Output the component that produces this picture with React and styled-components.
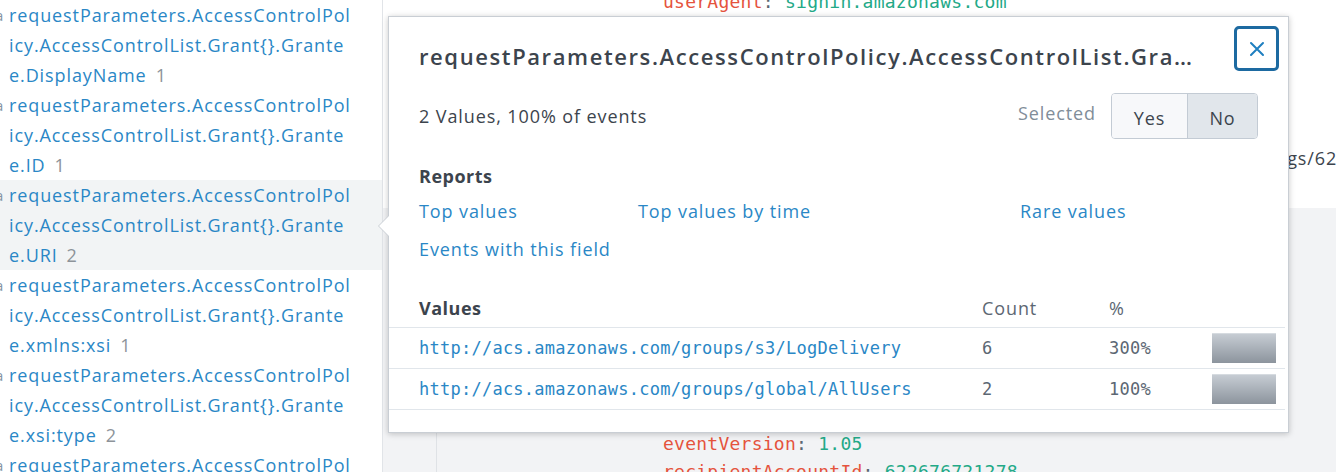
import React from 'react';
import styled, { createGlobalStyle } from 'styled-components';

const GlobalStyle = createGlobalStyle`
  body {
    margin: 0;
    font-family: "Open Sans", "Liberation Sans", sans-serif;
    font-size: 18px;
    letter-spacing: 0.9px;
    color: #3c444d;
    background: #fff;
  }
`;

const fields = [
  { lines: ['requestParameters.AccessControlPol', 'icy.AccessControlList.Grant{}.Grante', 'e.DisplayName'], count: 1 },
  { lines: ['requestParameters.AccessControlPol', 'icy.AccessControlList.Grant{}.Grante', 'e.ID'], count: 1 },
  { lines: ['requestParameters.AccessControlPol', 'icy.AccessControlList.Grant{}.Grante', 'e.URI'], count: 2, active: true },
  { lines: ['requestParameters.AccessControlPol', 'icy.AccessControlList.Grant{}.Grante', 'e.xmlns:xsi'], count: 1 },
  { lines: ['requestParameters.AccessControlPol', 'icy.AccessControlList.Grant{}.Grante', 'e.xsi:type'], count: 2 },
  { lines: ['requestParameters.AccessControlPol', 'icy.AccessControlList.Grant{}.Grante', 'e.Type'], count: 2 },
];

const values = [
  { value: 'http://acs.amazonaws.com/groups/s3/LogDelivery', count: 6, pct: '300%' },
  { value: 'http://acs.amazonaws.com/groups/global/AllUsers', count: 2, pct: '100%' },
];

export default function App() {
  return (
    <Page>
      <GlobalStyle />
      <Sidebar>
        {fields.map((f, i) => (
          <FieldItem key={i} $active={f.active}>
            <TypeMark>a</TypeMark>
            <FieldName>
              {f.lines.map((l, j) => (
                <FieldLine key={j}>
                  {l}
                  {j === f.lines.length - 1 && <FieldCount>{f.count}</FieldCount>}
                </FieldLine>
              ))}
            </FieldName>
          </FieldItem>
        ))}
      </Sidebar>

      <Main>
        <TopPane>
          <CodeLine $first>
            <Key>userAgent</Key>: <Val>signin.amazonaws.com</Val>
          </CodeLine>
          <MetaLine>logs/622676721278</MetaLine>
        </TopPane>
        <CodeBlock>
          <Gutter />
          <CodeBody>
            <CodeLine>
              <Key>eventVersion</Key>: <Val>1.05</Val>
            </CodeLine>
            <CodeLine>
              <Key>recipientAccountId</Key>: <Val>622676721278</Val>
            </CodeLine>
          </CodeBody>
        </CodeBlock>
      </Main>

      <Popover>
        <Arrow />
        <PopHeader>
          <PopTitle>requestParameters.AccessControlPolicy.AccessControlList.Grant{'{}'}.Grantee.URI</PopTitle>
          <CloseButton type="button" aria-label="Close">
            <svg width="16" height="16" viewBox="0 0 16 16">
              <path d="M2 2 L14 14 M14 2 L2 14" stroke="#1f7fc0" strokeWidth="2" strokeLinecap="round" />
            </svg>
          </CloseButton>
        </PopHeader>

        <StatsRow>
          <Stats>2 Values, 100% of events</Stats>
          <SelectWrap>
            <SelectLabel>Selected</SelectLabel>
            <ToggleGroup>
              <ToggleButton type="button">Yes</ToggleButton>
              <ToggleButton type="button" $on>No</ToggleButton>
            </ToggleGroup>
          </SelectWrap>
        </StatsRow>

        <Section>
          <SectionTitle>Reports</SectionTitle>
          <ReportGrid>
            <Link>Top values</Link>
            <Link>Top values by time</Link>
            <Link>Rare values</Link>
            <Link>Events with this field</Link>
          </ReportGrid>
        </Section>

        <Table>
          <HeadRow>
            <HeadCell $bold>Values</HeadCell>
            <HeadCell>Count</HeadCell>
            <HeadCell>%</HeadCell>
            <HeadCell />
          </HeadRow>
          {values.map((v) => (
            <Row key={v.value}>
              <ValueCell>{v.value}</ValueCell>
              <NumCell>{v.count}</NumCell>
              <NumCell>{v.pct}</NumCell>
              <BarCell>
                <Bar />
              </BarCell>
            </Row>
          ))}
        </Table>
      </Popover>
    </Page>
  );
}

const mono = `
  font-family: "DejaVu Sans Mono", "Liberation Mono", monospace;
  letter-spacing: 0.25px;
`;

const Page = styled.div`
  position: relative;
  display: flex;
  width: 1336px;
  height: 472px;
  overflow: hidden;
`;

const Sidebar = styled.aside`
  width: 382px;
  flex-shrink: 0;
  border-right: 1px solid #e1e4e8;
`;

const FieldItem = styled.div`
  display: flex;
  height: 90px;
  background: ${(p) => (p.$active ? '#f2f4f5' : 'transparent')};
`;

const TypeMark = styled.span`
  width: 9px;
  flex-shrink: 0;
  overflow: hidden;
  font-size: 15px;
  line-height: 31px;
  letter-spacing: 0;
  color: #8595a6;
  text-indent: -5px;
`;

const FieldName = styled.div`
  font-size: 18px;
  line-height: 30px;
  color: #2a87c6;
  white-space: nowrap;
`;

const FieldLine = styled.div``;

const FieldCount = styled.span`
  color: #8d9399;
  margin-left: 9px;
`;

const Main = styled.main`
  flex: 1;
  display: flex;
  flex-direction: column;
  min-width: 0;
`;

const TopPane = styled.div`
  height: 208px;
  flex-shrink: 0;
  overflow: hidden;
`;

const CodeLine = styled.div`
  ${mono}
  font-size: 18px;
  line-height: 28px;
  white-space: nowrap;
  color: #5c6773;
  margin-top: ${(p) => (p.$first ? '-12px' : '0')};
  padding-left: ${(p) => (p.$first ? '280px' : '0')};
`;

const Key = styled.span`
  color: #e5533d;
`;

const Val = styled.span`
  color: #23a987;
`;

const MetaLine = styled.div`
  margin-top: 127px;
  padding-left: 887px;
  font-size: 18px;
  line-height: 30px;
  color: #3c444d;
  white-space: nowrap;
`;

const CodeBlock = styled.div`
  flex: 1;
  min-height: 0;
  overflow: hidden;
  display: flex;
  background: #f2f3f5;
`;

const Gutter = styled.div`
  width: 53px;
  flex-shrink: 0;
  border-right: 1px solid #dfe2e6;
`;

const CodeBody = styled.div`
  padding: 222px 0 0 226px;
`;

const Popover = styled.div`
  position: absolute;
  left: 388px;
  top: 16px;
  width: 899px;
  height: 415px;
  background: #fff;
  border: 1px solid #c9ced4;
  box-shadow: 0 1px 6px rgba(0, 0, 0, 0.22);
  display: flex;
  flex-direction: column;
`;

const Arrow = styled.div`
  position: absolute;
  left: -11px;
  top: 198px;
  width: 0;
  height: 0;
  border-top: 11px solid transparent;
  border-bottom: 11px solid transparent;
  border-right: 11px solid #c9ced4;

  &::after {
    content: '';
    position: absolute;
    left: 1px;
    top: -10px;
    border-top: 10px solid transparent;
    border-bottom: 10px solid transparent;
    border-right: 10px solid #fff;
  }
`;

const PopHeader = styled.div`
  display: flex;
  align-items: flex-start;
  justify-content: space-between;
  padding: 9px 9px 0 30px;
`;

const PopTitle = styled.h2`
  margin: 17px 0 0;
  width: 778px;
  font-size: 22px;
  line-height: 26px;
  font-weight: 600;
  letter-spacing: 1.6px;
  color: #3c444d;
  white-space: nowrap;
  overflow: hidden;
  text-overflow: ellipsis;
`;

const CloseButton = styled.button`
  width: 45px;
  height: 45px;
  display: flex;
  align-items: center;
  justify-content: center;
  padding: 0;
  background: #fff;
  border: 3px solid #1d6aa1;
  border-radius: 5px;
  cursor: pointer;
`;

const StatsRow = styled.div`
  display: flex;
  align-items: center;
  justify-content: space-between;
  margin-top: 22px;
  padding: 0 30px;
`;

const Stats = styled.div`
  font-size: 18px;
`;

const SelectWrap = styled.div`
  display: flex;
  align-items: center;
  gap: 15px;
`;

const SelectLabel = styled.span`
  font-size: 18px;
  color: #818d99;
  margin-top: -6px;
`;

const ToggleGroup = styled.div`
  display: flex;
  border: 1px solid #c3cbd4;
  border-radius: 4px;
  overflow: hidden;
`;

const ToggleButton = styled.button`
  height: 44px;
  width: ${(p) => (p.$on ? '70px' : '75px')};
  border: none;
  border-left: ${(p) => (p.$on ? '1px solid #c3cbd4' : 'none')};
  background: ${(p) => (p.$on ? '#e1e6eb' : '#f7f8fa')};
  font-family: inherit;
  font-size: 18px;
  letter-spacing: 0.9px;
  color: #3c444d;
  padding: 3px 0 0;
`;

const Section = styled.div`
  margin-top: 22px;
  padding: 0 30px;
`;

const SectionTitle = styled.h3`
  margin: 0;
  font-size: 18px;
  line-height: 30px;
  font-weight: 700;
  letter-spacing: 0.5px;
`;

const ReportGrid = styled.div`
  display: grid;
  grid-template-columns: 219px 382px auto;
  row-gap: 8px;
  margin-top: 5px;
`;

const Link = styled.a`
  font-size: 18px;
  line-height: 30px;
  color: #2a87c6;
  cursor: pointer;
`;

const Table = styled.div`
  margin-top: 24px;
  margin-right: 3px;
`;

const gridCols = `
  display: grid;
  grid-template-columns: 593px 127px 103px 1fr;
  align-items: center;
  border-bottom: 1px solid #e1e6eb;
`;

const HeadRow = styled.div`
  ${gridCols}
  height: 39px;
`;

const HeadCell = styled.div`
  font-size: 18px;
  font-weight: ${(p) => (p.$bold ? 700 : 400)};
  letter-spacing: ${(p) => (p.$bold ? '0.5px' : '0.9px')};
  color: ${(p) => (p.$bold ? '#3c444d' : '#5c6773')};
  &:first-child {
    padding-left: 30px;
  }
`;

const Row = styled.div`
  ${gridCols}
  height: 40px;
`;

const ValueCell = styled.div`
  ${mono}
  padding-left: 30px;
  font-size: 17px;
  color: #2a87c6;
  white-space: nowrap;
`;

const NumCell = styled.div`
  ${mono}
  font-size: 17px;
  color: #5c6773;
`;

const BarCell = styled.div`
  display: flex;
`;

const Bar = styled.div`
  width: 64px;
  height: 29px;
  background: linear-gradient(#c6ccd3, #8c949d);
  border-top: 1px solid #d6dbe0;
`;
